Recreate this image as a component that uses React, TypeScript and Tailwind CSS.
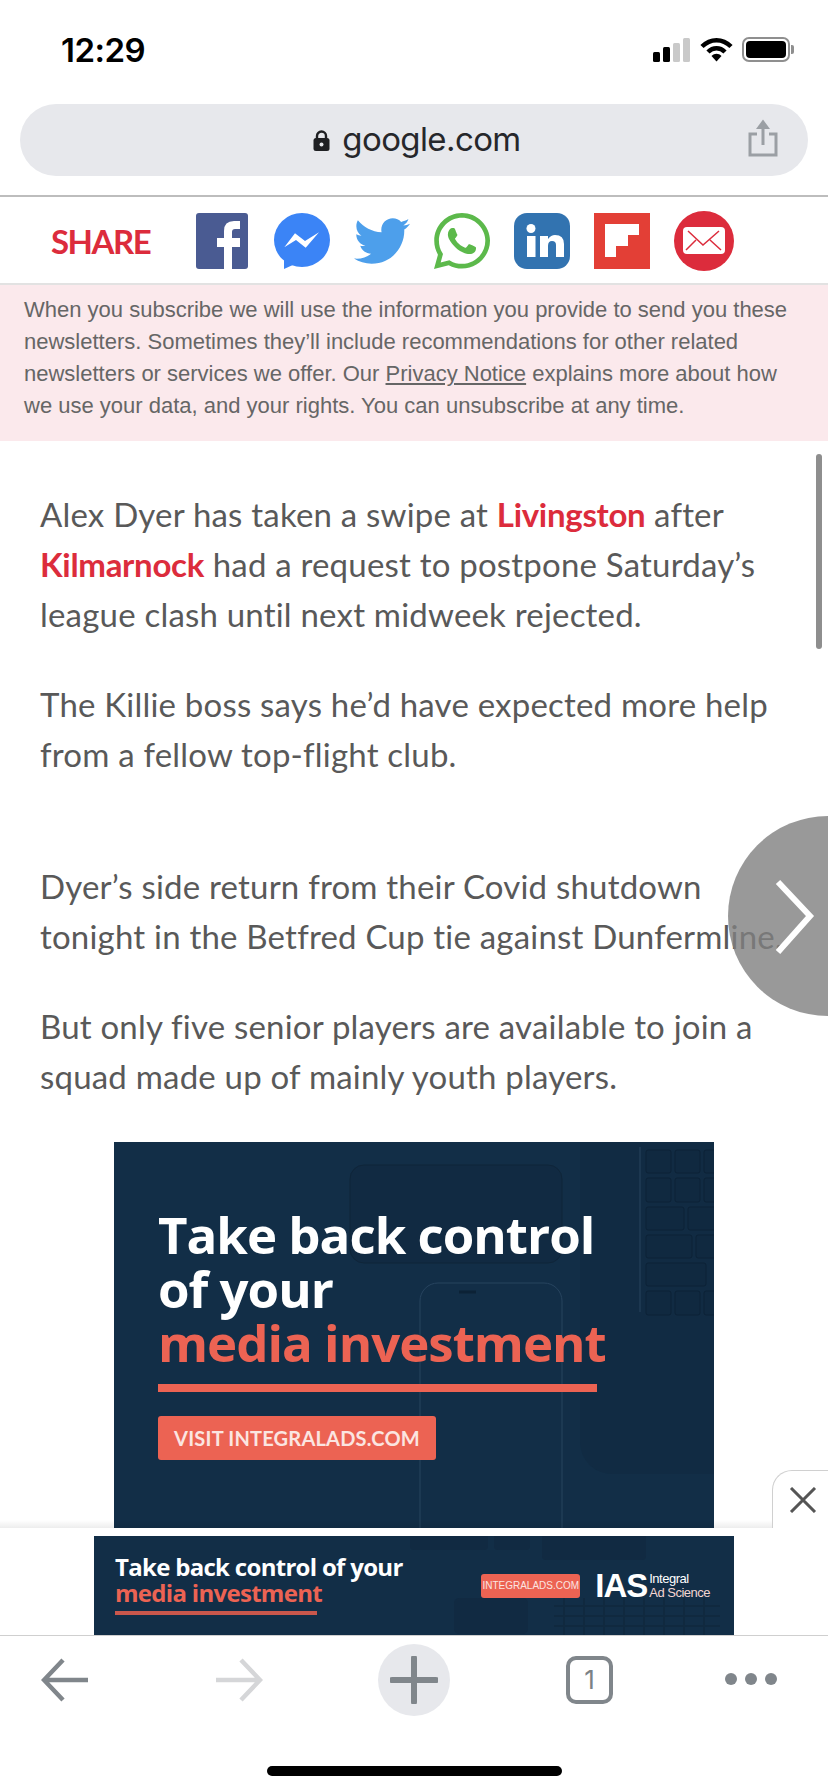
import React from 'react';
import { FaTwitter, FaWhatsapp } from 'react-icons/fa';

function StatusBar() {
  return (
    <div className="h-[104px] flex items-start justify-between pl-[61px] pr-[34px] pt-[30px] shrink-0">
      <span className="font-['Inter',sans-serif] text-[33px] leading-[40px] font-semibold text-black tracking-[-0.5px]">12:29</span>
      <div className="flex items-start">
        <svg width="38" height="24" viewBox="0 0 38 24" className="mt-[8px]">
          <rect x="0" y="14" width="7" height="10" rx="1.5" fill="#000" />
          <rect x="10" y="9" width="7" height="15" rx="1.5" fill="#000" />
          <rect x="20" y="5" width="7" height="19" rx="1.5" fill="#c9c9c9" />
          <rect x="30" y="0" width="7" height="24" rx="1.5" fill="#c9c9c9" />
        </svg>
        <svg width="33" height="25" viewBox="0 0 33 25" className="ml-[9px] mt-[7px]">
          <path d="M2 9.500C10.500 1 22.500 1 31 9.500" fill="none" stroke="#000" strokeWidth="4.500" />
          <path d="M8 15C13 10 20 10 25 15" fill="none" stroke="#000" strokeWidth="4.500" />
          <path d="M11.500 19L16.500 24.500L21.500 19C18.500 16 14.500 16 11.500 19Z" fill="#000" />
        </svg>
        <div className="ml-[9px] mt-[7px] w-[48px] h-[25px] rounded-[7px] border-2 border-[#8f8f8f] p-[2px]">
          <div className="w-full h-full bg-black rounded-[4px]" />
        </div>
        <div className="mt-[15px] ml-[1px] w-[3px] h-[9px] bg-[#8f8f8f] rounded-r-[2px]" />
      </div>
    </div>
  );
}

function UrlBar() {
  return (
    <div className="shrink-0 h-[93px] border-b-2 border-[#bdbdbd]">
      <div className="relative mx-[20px] h-[72px] w-[788px] rounded-full bg-[#e7e8ec] flex items-center justify-center pl-[6px] pb-[3px]">
        <svg width="17" height="21" viewBox="0 0 17 21" className="mr-[12px] mt-[4px]">
          <path d="M4 9V6a4.500 4.500 0 0 1 9 0v3" fill="none" stroke="#1f2023" strokeWidth="2.400" />
          <rect x="0.500" y="8" width="16" height="13" rx="2.500" fill="#1f2023" />
          <circle cx="8.500" cy="14.500" r="2" fill="#e7e8ec" />
        </svg>
        <span className="font-['Inter',sans-serif] text-[33px] leading-[40px] text-[#26272b] tracking-[-0.6px]">google.com</span>
        <svg width="30" height="38" viewBox="0 0 30 38" className="absolute right-[30px] top-[15px]">
          <path d="M9 15H2v21h26V15h-7" fill="none" stroke="#9b9fa4" strokeWidth="3" />
          <path d="M15 26V4" stroke="#9b9fa4" strokeWidth="3" />
          <path d="M8 10L15 0.500L22 10Z" fill="#9b9fa4" />
        </svg>
      </div>
    </div>
  );
}

function ShareRow() {
  return (
    <div className="shrink-0 h-[88px] border-b-2 border-[#e2e2e2] flex items-center pl-[51px] pb-[1px] pt-[2px]">
      <span className="w-[145px] font-['Lato',sans-serif] font-bold text-[33px] leading-[40px] text-[#dc2c3c] tracking-[-1.5px]">SHARE</span>
      <svg width="52" height="56" viewBox="0 0 52 56">
        <rect width="52" height="56" rx="3" fill="#4a5b92" />
        <path d="M36 56V34H44V25H36V19Q36 16 39 16H44V8H38Q28 8 28 18V25H21V34H28V56Z" fill="#fff" />
      </svg>
      <svg width="56" height="56" viewBox="0 0 56 56" className="ml-[26px]">
        <ellipse cx="28" cy="27" rx="28" ry="27" fill="#3b84f6" />
        <path d="M10 46V56L21 51Z" fill="#3b84f6" />
        <path d="M10.300 34.300L21 20.300L31 28L45 19.300L31.700 34.700L22 27Z" fill="#fff" />
      </svg>
      <div className="ml-[24px] w-[56px] h-[56px] flex items-center justify-center">
        <FaTwitter className="text-[#4d9feb]" size={58} />
      </div>
      <div className="ml-[24px] w-[56px] h-[56px] flex items-center justify-center">
        <FaWhatsapp className="text-[#5cb94b]" size={64} />
      </div>
      <svg width="56" height="56" viewBox="0 0 56 56" className="ml-[24px]">
        <rect width="56" height="56" rx="13" fill="#3273b0" />
        <circle cx="17" cy="15.500" r="4.500" fill="#fff" />
        <rect x="13" y="23" width="8.500" height="21" fill="#fff" />
        <path d="M26 23H34V26Q37 22 41 22Q50 22 50 31V44H42V32Q42 28 38 28Q34 28 34 33V44H26Z" fill="#fff" />
      </svg>
      <svg width="56" height="56" viewBox="0 0 56 56" className="ml-[24px]">
        <rect width="56" height="56" fill="#e33f36" />
        <path d="M11 11H45V22H34V33H22V44H11Z" fill="#fff" />
      </svg>
      <svg width="60" height="60" viewBox="0 0 60 60" className="ml-[24px]">
        <circle cx="30" cy="30" r="30" fill="#dc2c3c" />
        <rect x="9" y="16" width="42" height="27" rx="4" fill="#fff" />
        <path d="M14 20L29 34L45 20M12 39L22 29M47 39L36 29" fill="none" stroke="#dc2c3c" strokeWidth="1.500" />
      </svg>
    </div>
  );
}

function Article() {
  return (
    <div className="font-['Lato',sans-serif] text-[33px] leading-[50px] text-[#595959] pl-[40px] pt-[48px] whitespace-nowrap tracking-[0.2px]">
      <p>
        Alex Dyer has taken a swipe at <b className="text-[#dc2c3c] font-bold tracking-[-0.3px]">Livingston</b> after<br />
        <b className="text-[#dc2c3c] font-bold tracking-[-0.3px]">Kilmarnock</b> had a request to postpone Saturday’s<br />
        league clash until next midweek rejected.
      </p>
      <p className="mt-[40px]">
        The Killie boss says he’d have expected more help<br />
        from a fellow top-flight club.
      </p>
      <p className="mt-[82px]">
        Dyer’s side return from their Covid shutdown<br />
        tonight in the Betfred Cup tie against Dunfermline.
      </p>
      <p className="mt-[40px]">
        But only five senior players are available to join a<br />
        squad made up of mainly youth players.
      </p>
    </div>
  );
}

function BigAd() {
  return (
    <div className="relative mt-[41px] ml-[114px] w-[600px] h-[450px] bg-[#122e47] overflow-hidden">
      <svg width="600" height="450" viewBox="0 0 600 450" className="absolute inset-0" fill="none">
        <rect x="236" y="23" width="212" height="98" rx="14" fill="#112a42" stroke="#0f2539" />
        <path d="M466 0V300a32 32 0 0 0 32 32H600V0Z" fill="#112b43" />
        <rect x="306" y="141" width="142" height="320" rx="18" fill="#122e47" stroke="#27445f" />
        <path d="M345 150H362" stroke="#0c2236" strokeWidth="3" />
        <path d="M526 5V170" stroke="#29455f" />
        <g fill="#102940" stroke="#0c2236">
          <rect x="532" y="8" width="25" height="23" rx="2" />
          <rect x="561" y="8" width="25" height="23" rx="2" />
          <rect x="590" y="8" width="25" height="23" rx="2" />
          <rect x="532" y="36" width="25" height="24" rx="2" />
          <rect x="561" y="36" width="25" height="24" rx="2" />
          <rect x="590" y="36" width="25" height="24" rx="2" />
          <rect x="532" y="65" width="38" height="23" rx="2" />
          <rect x="574" y="65" width="38" height="23" rx="2" />
          <rect x="532" y="93" width="46" height="23" rx="2" />
          <rect x="582" y="93" width="38" height="23" rx="2" />
          <rect x="532" y="121" width="60" height="23" rx="2" />
          <rect x="532" y="149" width="25" height="24" rx="2" />
          <rect x="561" y="149" width="25" height="24" rx="2" />
          <rect x="590" y="149" width="25" height="24" rx="2" />
        </g>
      </svg>
      <div className="relative pl-[44px] pt-[65px] font-['Open_Sans',sans-serif] font-bold text-[51px] leading-[54px] whitespace-nowrap tracking-[-1px]">
        <div className="text-white">Take back control</div>
        <div className="text-white">of your</div>
        <div className="text-[#ec6353]">media investment</div>
        <div className="mt-[15px] w-[439px] h-[8px] bg-[#ec6353]" />
        <div className="mt-[24px] w-[278px] h-[44px] rounded-[3px] bg-[#ec6353] flex items-center justify-center font-['Lato',sans-serif] font-bold text-[#fbe5e1] text-[20px] leading-[26px] tracking-[0.2px]">
          VISIT INTEGRALADS.COM
        </div>
      </div>
    </div>
  );
}

function StripAd() {
  return (
    <div className="h-[107px] shrink-0 bg-white pt-[8px]">
      <div className="relative mx-auto w-[640px] h-[100px] bg-[#122e47] overflow-hidden flex items-start justify-between">
        <svg width="640" height="100" viewBox="0 0 640 100" className="absolute inset-0" fill="none">
          <rect x="316" y="-10" width="78" height="24" rx="4" fill="#112a42" />
          <rect x="400" y="-10" width="36" height="24" rx="4" fill="#112a42" />
          <rect x="448" y="-10" width="104" height="34" rx="4" fill="#112a42" />
          <rect x="360" y="62" width="74" height="36" rx="5" fill="#112a42" />
          <path d="M460 70H626M460 80H626M460 90H626M470 62V100M490 62V100M510 62V100M530 62V100M550 62V100M570 62V100M590 62V100M610 62V100" stroke="#10293f" strokeWidth="2" />
        </svg>
        <div className="relative pl-[21px] pt-[18px] font-['Open_Sans',sans-serif] font-bold text-[24px] leading-[26px] whitespace-nowrap tracking-[-0.7px]">
          <div className="text-white">Take back control of your</div>
          <div className="text-[#ec6353]">media investment</div>
          <div className="mt-[5px] w-[202px] h-[4px] bg-[#c9574c]" />
        </div>
        <div className="relative flex items-center mt-[36px] mr-[24px]">
          <div className="w-[99px] h-[24px] rounded-[3px] bg-[#ec6353] flex items-center justify-center font-['Liberation_Sans',sans-serif] text-[#fbe5e1] text-[10px] leading-[14px]">INTEGRALADS.COM</div>
          <span className="ml-[15px] font-['Liberation_Sans',sans-serif] font-bold text-white text-[33px] leading-[28px] tracking-[-1px]">IAS</span>
          <div className="ml-[2px] font-['Liberation_Sans',sans-serif] text-white text-[13px] leading-[14px] tracking-[-0.5px] whitespace-nowrap">
            <div>Integral</div>
            <div className="text-[#f3d6d2]">Ad Science</div>
          </div>
        </div>
      </div>
    </div>
  );
}

function Toolbar() {
  return (
    <div className="relative z-10 h-[157px] shrink-0 bg-white border-t border-[#cfcfcf] pl-[41px] pt-[8px]">
      <div className="flex items-start">
        <svg width="48" height="44" viewBox="0 0 48 44" className="mt-[14px]" fill="none">
          <path d="M22 2L3 22L22 42M3 22H47" stroke="#80868b" strokeWidth="4.500" />
        </svg>
        <svg width="48" height="44" viewBox="0 0 48 44" className="mt-[14px] ml-[126px]" fill="none">
          <path d="M26 2L45 22L26 42M45 22H1" stroke="#d5d6d8" strokeWidth="4.500" />
        </svg>
        <div className="ml-[115px] w-[72px] h-[72px] rounded-full bg-[#e7e8ec] flex items-center justify-center">
          <svg width="48" height="48" viewBox="0 0 48 48" fill="none">
            <path d="M24 2V46M2 24H46" stroke="#80868b" strokeWidth="6" strokeLinecap="round" />
          </svg>
        </div>
        <div className="ml-[116px] mt-[12px] w-[47px] h-[48px] rounded-[10px] border-[4px] border-[#80868b] flex items-center justify-center font-['Inter',sans-serif] text-[26px] leading-[30px] text-[#7b8186]">1</div>
        <div className="ml-[112px] mt-[29px] w-[52px] flex justify-between">
          <div className="w-[12px] h-[12px] rounded-full bg-[#80868b]" />
          <div className="w-[12px] h-[12px] rounded-full bg-[#80868b]" />
          <div className="w-[12px] h-[12px] rounded-full bg-[#80868b]" />
        </div>
      </div>
      <div className="mt-[50px] ml-[226px] w-[295px] h-[10px] rounded-full bg-black" />
    </div>
  );
}

export default function App() {
  return (
    <div className="w-[828px] h-[1792px] bg-white flex flex-col overflow-hidden font-['Liberation_Sans',sans-serif]">
      <StatusBar />
      <UrlBar />
      <ShareRow />
      <div className="h-[156px] shrink-0 bg-[#fbe9ec] pl-[24px] pt-[9px] text-[22px] leading-[32px] text-[#666] whitespace-nowrap">
        When you subscribe we will use the information you provide to send you these<br />
        newsletters. Sometimes they’ll include recommendations for other related<br />
        newsletters or services we offer. Our <span className="underline">Privacy Notice</span> explains more about how<br />
        we use your data, and your rights. You can unsubscribe at any time.
      </div>

      <div className="relative flex-1 min-h-0 overflow-hidden">
        <Article />
        <BigAd />
        {/* scroll thumb */}
        <div className="absolute left-[816px] top-[13px] w-[6px] h-[195px] rounded-full bg-[#8e8e8e]" />
        {/* next article arrow */}
        <div className="absolute left-[728px] top-[375px] w-[200px] h-[200px] rounded-full bg-[#808080]/80">
          <svg width="48" height="80" viewBox="0 0 48 80" className="absolute left-[46px] top-[60px]" fill="none">
            <path d="M4 6L36 40L4 76" stroke="#fff" strokeWidth="6" />
          </svg>
        </div>
        <div className="absolute inset-x-0 bottom-0 h-[8px] bg-gradient-to-b from-transparent to-[#00000012]" />
        {/* close tab for sticky ad */}
        <div className="absolute right-0 bottom-0 w-[56px] h-[58px] bg-white rounded-tl-[20px] border-t border-l border-[#d0d0d0] flex items-center justify-center">
          <svg width="28" height="26" viewBox="0 0 28 26" className="ml-[4px]" fill="none">
            <path d="M2 1L26 25M26 1L2 25" stroke="#555" strokeWidth="3" />
          </svg>
        </div>
      </div>

      <StripAd />
      <Toolbar />
    </div>
  );
}
